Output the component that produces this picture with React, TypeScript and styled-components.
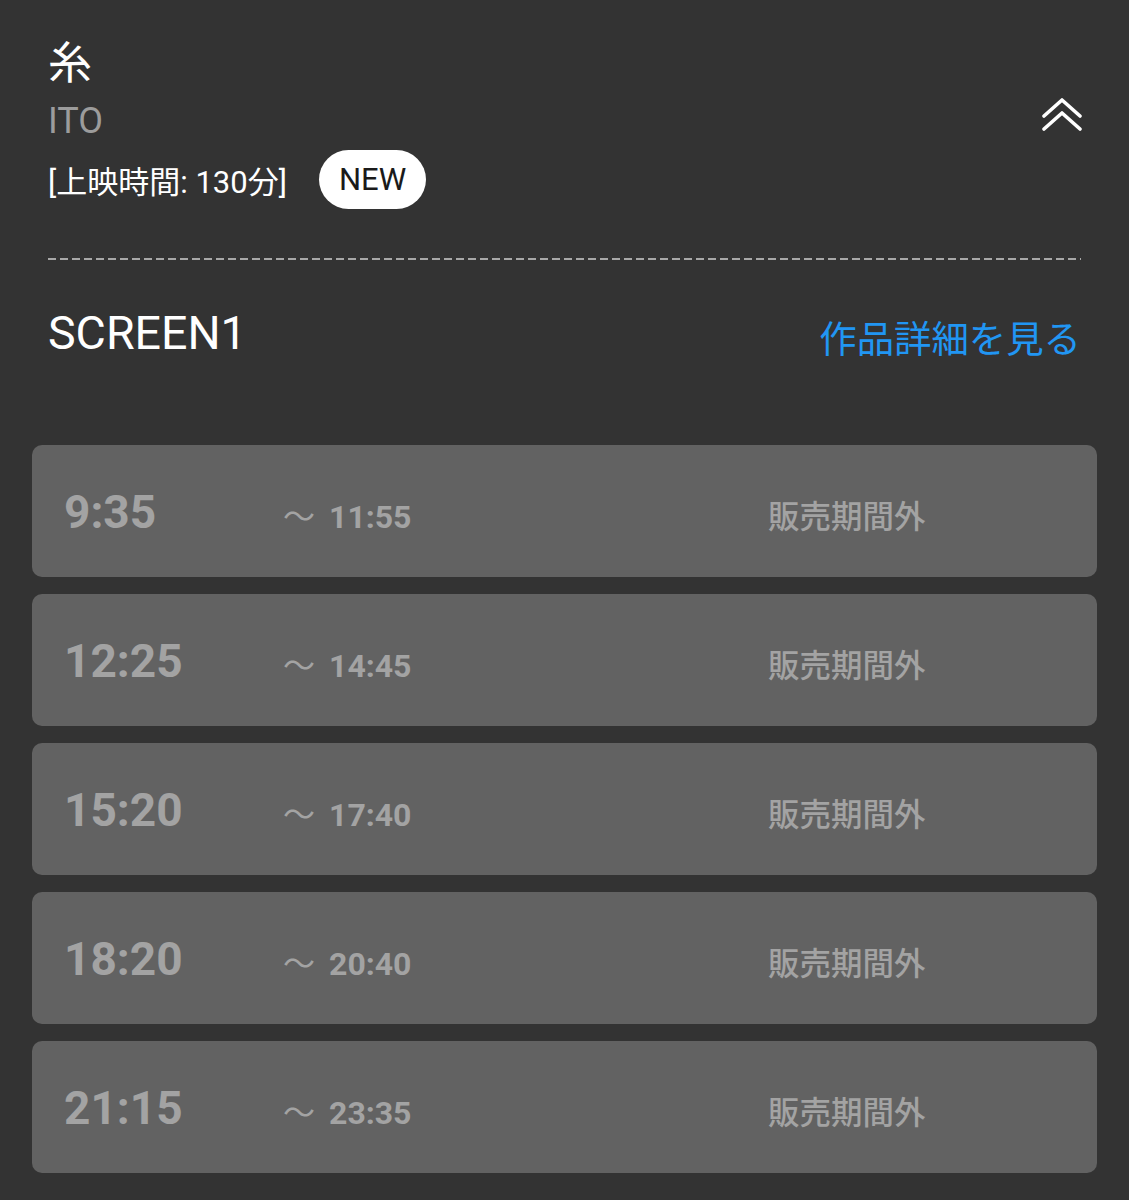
import styled, { createGlobalStyle } from "styled-components"

const GlobalStyle = createGlobalStyle`
    body {
        margin: 0;
        background: #333333;
        font-family: Roboto, "Noto Sans CJK JP", sans-serif;
    }
`

const Page = styled.div`
    padding: 28px 32px 24px;
`

const Header = styled.div`
    display: flex;
    justify-content: space-between;
    align-items: center;
    padding: 0 16px;
`

const TitleBlock = styled.div`
    display: flex;
    flex-direction: column;
`

const Title = styled.h1`
    margin: 0;
    font-family: "Noto Sans CJK JP", sans-serif;
    font-weight: 400;
    font-size: 44px;
    line-height: 64px;
    color: #ffffff;
`

const SubTitle = styled.p`
    margin: 3px 0 0;
    font-size: 36px;
    line-height: 52px;
    color: #9c9c9c;
`

const MetaRow = styled.div`
    display: flex;
    align-items: center;
    gap: 32px;
    margin-top: 3px;
`

const Duration = styled.span`
    font-size: 31px;
    color: #ffffff;
`

const Badge = styled.span`
    display: inline-flex;
    align-items: center;
    height: 59px;
    padding: 0 20px;
    border-radius: 30px;
    background: #ffffff;
    color: #1a1a1a;
    font-size: 31px;
`

const CollapseButton = styled.button`
    display: flex;
    border: none;
    background: none;
    padding: 0;
    margin: 0 -1px 6px 0;
    cursor: pointer;
`

const Divider = styled.div`
    height: 2px;
    margin: 49px 16px 0;
    background: repeating-linear-gradient(to right, #a8a8a8 0 8px, transparent 8px 12px);
`

const ScreenRow = styled.div`
    display: flex;
    justify-content: space-between;
    align-items: flex-start;
    padding: 0 16px;
    margin-top: 45px;
`

const ScreenName = styled.h2`
    margin: 0;
    font-weight: 400;
    font-size: 46.5px;
    line-height: 56px;
    color: #ffffff;
`

const DetailLink = styled.a`
    margin-top: 4px;
    font-family: "Noto Sans CJK JP", sans-serif;
    font-size: 37.4px;
    line-height: 56px;
    color: #2196f3;
    text-decoration: none;
`

const Showtimes = styled.div`
    display: flex;
    flex-direction: column;
    gap: 17px;
    margin-top: 80px;
`

const Card = styled.div`
    display: flex;
    align-items: baseline;
    height: 132px;
    box-sizing: border-box;
    padding: 39px 32px 0;
    border-radius: 10px;
    background: #626262;
    color: #a3a3a3;
`

const StartTime = styled.span`
    width: 219px;
    font-size: 46px;
    font-weight: 700;
    line-height: 56px;
`

const EndTime = styled.span`
    display: flex;
    align-items: baseline;
    gap: 14px;
    width: 485px;
    font-size: 32px;
    font-weight: 700;
`

const Tilde = styled.span`
    font-family: "Noto Sans CJK JP", sans-serif;
    font-weight: 400;
    font-size: 32px;
`

const Status = styled.span`
    font-family: "Noto Sans CJK JP", sans-serif;
    font-size: 31.5px;
    font-weight: 500;
`

function ChevronsUp() {
    return (
        <svg width="40" height="36" viewBox="0 0 40 36" fill="none" stroke="#ffffff" strokeWidth="3.6" strokeLinecap="round" strokeLinejoin="round">
            <polyline points="2,18 20,2 38,18" />
            <polyline points="2,31 20,15 38,31" />
        </svg>
    )
}

const shows = [
    { start: "9:35", end: "11:55" },
    { start: "12:25", end: "14:45" },
    { start: "15:20", end: "17:40" },
    { start: "18:20", end: "20:40" },
    { start: "21:15", end: "23:35" },
]

export default function App() {
    return (
        <Page>
            <GlobalStyle />
            <Header>
                <TitleBlock>
                    <Title>糸</Title>
                    <SubTitle>ITO</SubTitle>
                    <MetaRow>
                        <Duration>[上映時間: 130分]</Duration>
                        <Badge>NEW</Badge>
                    </MetaRow>
                </TitleBlock>
                <CollapseButton aria-label="閉じる">
                    <ChevronsUp />
                </CollapseButton>
            </Header>
            <Divider />
            <ScreenRow>
                <ScreenName>SCREEN1</ScreenName>
                <DetailLink href="#">作品詳細を見る</DetailLink>
            </ScreenRow>
            <Showtimes>
                {shows.map((s) => (
                    <Card key={s.start}>
                        <StartTime>{s.start}</StartTime>
                        <EndTime>
                            <Tilde>〜</Tilde>
                            {s.end}
                        </EndTime>
                        <Status>販売期間外</Status>
                    </Card>
                ))}
            </Showtimes>
        </Page>
    )
}
